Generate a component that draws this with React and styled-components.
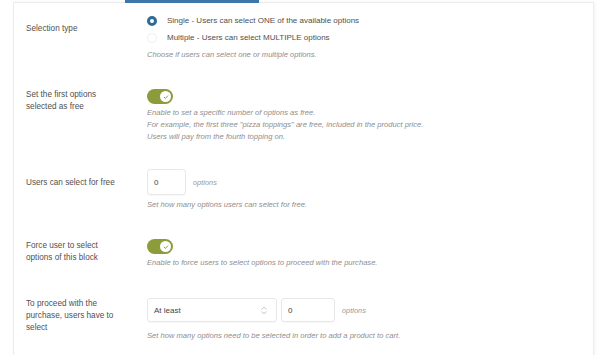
import React from 'react'
import styled, { createGlobalStyle } from 'styled-components'

const GlobalStyle = createGlobalStyle`
  html, body {
    margin: 0;
    padding: 0;
    background: #ffffff;
  }
  body {
    font-family: 'Liberation Sans', Arial, sans-serif;
    color: #4f4f4f;
  }
`

const Check = () => (
  <svg width="6" height="6" viewBox="0 0 10 10">
    <path d="M2 5.3 L4.2 7.4 L8 3" fill="none" stroke="#8c9c3b" strokeWidth="1.6" strokeLinecap="round" strokeLinejoin="round" />
  </svg>
)

const Arrows = () => (
  <svg width="6" height="9" viewBox="0 0 6 9">
    <path d="M1 3.2 L3 1.2 L5 3.2 M1 5.8 L3 7.8 L5 5.8" fill="none" stroke="#b5b5b5" strokeWidth="0.9" strokeLinecap="round" strokeLinejoin="round" />
  </svg>
)

const Toggle = ({ on }) => (
  <Switch $on={on}>
    <Knob>
      <Check />
    </Knob>
  </Switch>
)

const App = () => {
  return (
    <Page>
      <GlobalStyle />
      <TabStrip>
        <ActiveTab />
      </TabStrip>
      <Panel>
        <Row>
          <Label $top={11}>Selection type</Label>
          <Field>
            <RadioLine>
              <Radio $checked />
              <span>Single - Users can select ONE of the available options</span>
            </RadioLine>
            <RadioLine>
              <Radio />
              <span>Multiple - Users can select MULTIPLE options</span>
            </RadioLine>
            <Help $mt={3}>Choose if users can select one or multiple options.</Help>
          </Field>
        </Row>

        <Row $gap={28}>
          <Label $top={0}>Set the first options<br />selected as free</Label>
          <Field>
            <Toggle on />
            <Help $mt={3}>
              Enable to set a specific number of options as free.<br />
              For example, the first three "pizza toppings" are free, included in the product price.<br />
              Users will pay from the fourth topping on.
            </Help>
          </Field>
        </Row>

        <Row $gap={26}>
          <Label $top={8}>Users can select for free</Label>
          <Field>
            <Inline>
              <NumberBox $w={39}>0</NumberBox>
              <Unit>options</Unit>
            </Inline>
            <Help $mt={4}>Set how many options users can select for free.</Help>
          </Field>
        </Row>

        <Row $gap={28}>
          <Label $top={1}>Force user to select<br />options of this block</Label>
          <Field>
            <Toggle on />
            <Help $mt={3}>Enable to force users to select options to proceed with the purchase.</Help>
          </Field>
        </Row>

        <Row $gap={29}>
          <Label $top={0}>To proceed with the<br />purchase, users have to<br />select</Label>
          <Field>
            <Inline>
              <SelectBox>
                <span>At least</span>
                <Arrows />
              </SelectBox>
              <NumberBox $w={54} $h={24}>0</NumberBox>
              <Unit>options</Unit>
            </Inline>
            <Help $mt={8}>Set how many options need to be selected in order to add a product to cart.</Help>
          </Field>
        </Row>
      </Panel>
    </Page>
  )
}

export default App

const Page = styled.div`
  width: 607px;
  height: 355px;
  overflow: hidden;
  background: #ffffff;
`

const TabStrip = styled.div`
  height: 2px;
  display: flex;
  padding-left: 125px;
`

const ActiveTab = styled.div`
  width: 134px;
  height: 3px;
  background: #3b77ab;
  position: relative;
  z-index: 1;
`

const Panel = styled.div`
  margin: 0 13px 0 13px;
  height: 400px;
  border: 1px solid #ececec;
  box-shadow: 1px 0 3px rgba(0, 0, 0, 0.05);
  background: #fff;
  padding: 9px 12px 0 12px;
  display: flex;
  flex-direction: column;
`

const Row = styled.div`
  display: grid;
  grid-template-columns: 121px 1fr;
  align-items: start;
  margin-top: ${p => (p.$gap ? p.$gap : 0)}px;
`

const Label = styled.div`
  font-size: 8.2px;
  line-height: 12px;
  color: #4f4f4f;
  padding-top: ${p => p.$top}px;
`

const Field = styled.div`
  display: flex;
  flex-direction: column;
  align-items: flex-start;
`

const RadioLine = styled.div`
  height: 17px;
  display: flex;
  align-items: center;
  gap: 10px;
  font-size: 8px;
  color: #4f4f4f;
`

const Radio = styled.span`
  box-sizing: border-box;
  width: 10px;
  height: 10px;
  border-radius: 50%;
  border: ${p => (p.$checked ? '3px solid #2f6b98' : '1px solid #efefef')};
  background: #fff;
`

const Help = styled.div`
  margin-top: ${p => p.$mt}px;
  font-size: 7.6px;
  line-height: 12px;
  font-style: italic;
  color: #8e8e8e;
`

const Switch = styled.div`
  box-sizing: border-box;
  width: 26px;
  height: 15px;
  border-radius: 8px;
  background: ${p => (p.$on ? '#8c9c3b' : '#d6d6d6')};
  display: flex;
  align-items: center;
  justify-content: ${p => (p.$on ? 'flex-end' : 'flex-start')};
  padding: 0 2px;
`

const Knob = styled.div`
  width: 11px;
  height: 11px;
  border-radius: 50%;
  background: #fff;
  display: flex;
  align-items: center;
  justify-content: center;
`

const Inline = styled.div`
  display: flex;
  align-items: center;
  gap: 4px;
`

const NumberBox = styled.div`
  box-sizing: border-box;
  width: ${p => p.$w}px;
  height: ${p => p.$h || 26}px;
  border: 1px solid #e8e8e8;
  border-radius: 3px;
  box-shadow: 0 1px 1px rgba(0, 0, 0, 0.03);
  display: flex;
  align-items: center;
  padding-left: 6px;
  font-size: 8px;
  color: #444;
`

const SelectBox = styled.div`
  box-sizing: border-box;
  width: 130px;
  height: 24px;
  border: 1px solid #e8e8e8;
  border-radius: 3px;
  box-shadow: 0 1px 1px rgba(0, 0, 0, 0.03);
  display: flex;
  align-items: center;
  justify-content: space-between;
  padding: 0 9px 0 6px;
  font-size: 8px;
  color: #444;
`

const Unit = styled.span`
  margin-left: 3px;
  font-size: 7.4px;
  font-style: italic;
  color: #9a9a9a;
`
